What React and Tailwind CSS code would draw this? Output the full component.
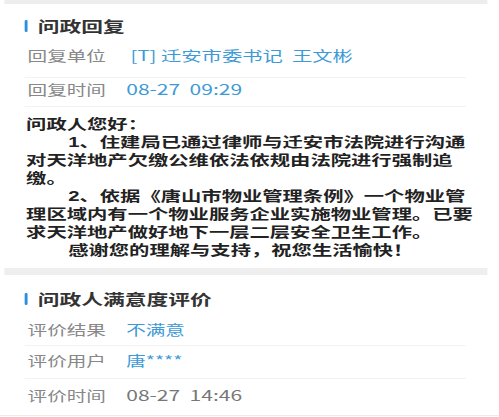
export default function App() {
  const font = { fontFamily: '"Noto Sans CJK SC", "Noto Sans", sans-serif' };
  const bodyFont = { fontFamily: '"Liberation Sans", "Noto Sans CJK SC", sans-serif' };
  const body = [
    { t: "问政人您好：", i: false },
    { t: "1、住建局已通过律师与迁安市法院进行沟通", i: true },
    { t: "对天洋地产欠缴公维依法依规由法院进行强制追", i: false },
    { t: "缴。", i: false },
    { t: "2、依据《唐山市物业管理条例》一个物业管", i: true },
    { t: "理区域内有一个物业服务企业实施物业管理。已要", i: false },
    { t: "求天洋地产做好地下一层二层安全卫生工作。", i: false },
    { t: "感谢您的理解与支持，祝您生活愉快！", i: true },
  ];
  return (
    <div className="w-[499px] h-[417px] overflow-hidden bg-white" style={font}>
      <div className="w-[344px] origin-top-left scale-x-[1.4506] bg-white">
        <div className="ml-[3px] w-[333px] h-[4px] bg-[#ededed]" />

        <div className="mt-[10px] h-[24px] flex items-center pl-[17px]">
          <div className="w-[2px] h-[12px] bg-[#2b8fe0] rounded-[1px]" />
          <div className="ml-[7px] text-[15px] leading-[24px] font-semibold text-[#333]">问政回复</div>
        </div>

        <div className="ml-[17px] mr-[23px] pl-[2px] pt-[7px] pb-[12px] border-b border-[#f2f2f2] flex text-[13.5px] leading-[20px]">
          <div className="w-[71px] text-[#888]">回复单位</div>
          <div className="text-[#3d9ad6] text-[14px] whitespace-nowrap">[T] 迁安市委书记&nbsp;&nbsp;王文彬</div>
        </div>
        <div className="ml-[17px] mr-[23px] pl-[2px] pt-[1px] pb-[7px] border-b border-[#f2f2f2] flex text-[13.5px] leading-[20px]">
          <div className="w-[68px] text-[#888]">回复时间</div>
          <div className="text-[#3d9ad6] text-[14.5px] whitespace-pre">08-27  09:29</div>
        </div>

        <div className="mt-[8px] pl-[18px] text-[14px] leading-[18px] font-bold text-[#222]" style={bodyFont}>
          {body.map((l, k) => (
            <div key={k} className={l.i ? "pl-[29px] whitespace-nowrap" : "whitespace-nowrap"}>{l.t}</div>
          ))}
        </div>

        <div className="mt-[9px] ml-[3px] w-[333px] h-[7px] bg-[#eeeeee]" />

        <div className="mt-[12px] h-[24px] flex items-center pl-[17px]">
          <div className="w-[2px] h-[12px] bg-[#2b8fe0] rounded-[1px]" />
          <div className="ml-[7px] text-[15px] leading-[24px] font-semibold text-[#333]">问政人满意度评价</div>
        </div>

        <div className="ml-[17px] mr-[23px] pl-[2px] pt-[8px] pb-[6px] border-b border-[#f2f2f2] flex text-[13.5px] leading-[20px]">
          <div className="w-[68px] text-[#888]">评价结果</div>
          <div className="text-[#3d9ad6]">不满意</div>
        </div>
        <div className="ml-[17px] mr-[23px] pl-[2px] pt-[4px] pb-[8px] border-b border-[#f2f2f2] flex text-[13.5px] leading-[20px]">
          <div className="w-[68px] text-[#888]">评价用户</div>
          <div className="text-[#3d9ad6]">唐****</div>
        </div>
        <div className="pl-[19px] pt-[6px] pb-[10px] border-b border-[#ececec] flex text-[13.5px] leading-[20px]">
          <div className="w-[68px] text-[#888]">评价时间</div>
          <div className="text-[#777] text-[14.5px] whitespace-pre">08-27  14:46</div>
        </div>
      </div>
    </div>
  );
}
